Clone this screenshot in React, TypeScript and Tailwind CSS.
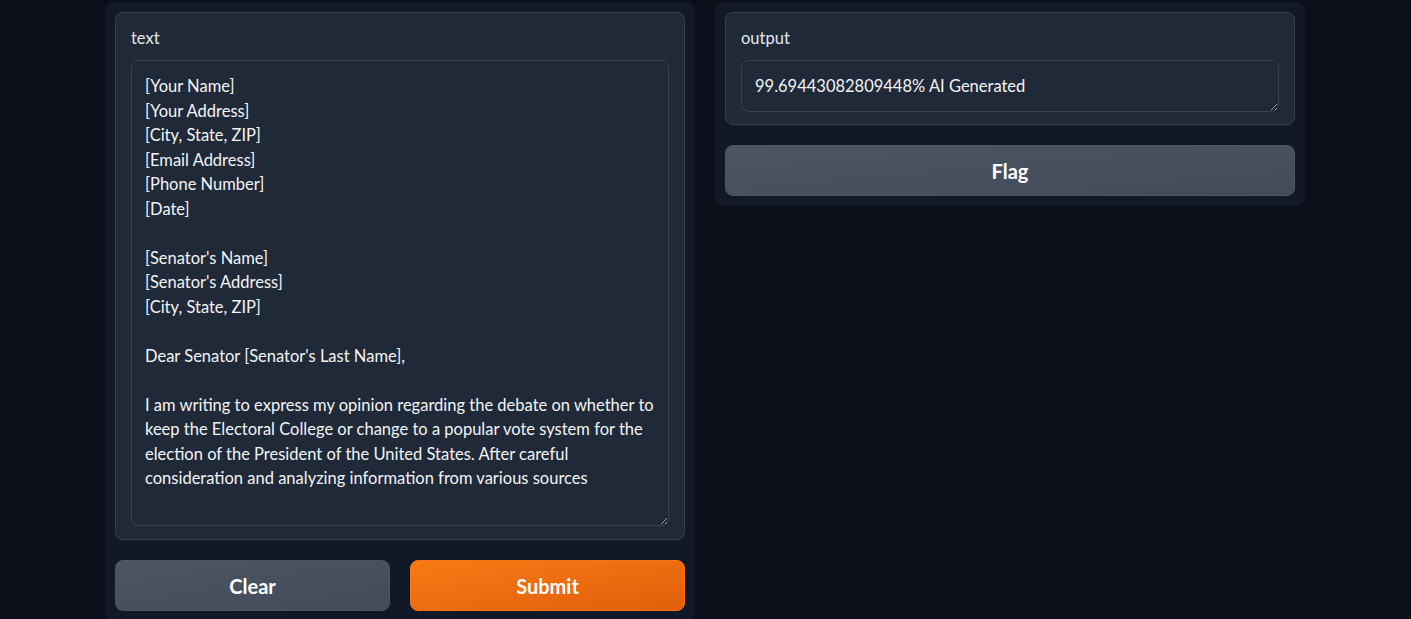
const letter = `[Your Name]
[Your Address]
[City, State, ZIP]
[Email Address]
[Phone Number]
[Date]

[Senator's Name]
[Senator's Address]
[City, State, ZIP]

Dear Senator [Senator's Last Name],

I am writing to express my opinion regarding the debate on whether to
keep the Electoral College or change to a popular vote system for the
election of the President of the United States. After careful
consideration and analyzing information from various sources`;

const fieldClass =
  "block w-full rounded-lg border border-[#374151] bg-[#1f2937] px-[13px] text-[16.5px] leading-[24.5px] text-[#f3f4f6] shadow-[inset_0_1px_2px_rgba(0,0,0,0.15)] outline-none [color-scheme:dark] whitespace-pre overflow-hidden";

const App = () => {
  return (
    <div
      className="min-h-screen bg-[#0b0f19]"
      style={{ fontFamily: "Lato, 'Open Sans', sans-serif" }}
    >
      <div className="mx-auto flex w-[1201px] items-start gap-5 pt-[2px]">
        {/* Input column */}
        <div className="flex w-[590px] flex-col gap-5 rounded-lg bg-[#111827] p-[10px]">
          <div className="rounded-lg border border-[#374151] bg-[#1f2937] px-[15px] pt-[15px] pb-[13px]">
            <div className="mb-[12px] text-[16.5px] leading-5 text-[#e5e7eb]">text</div>
            <textarea
              wrap="off"
              readOnly
              defaultValue={letter}
              className={`${fieldClass} h-[466px] resize-y pt-[13px]`}
            />
          </div>
          {/* Buttons */}
          <div className="flex gap-5">
            <button className="h-[51px] flex-1 rounded-lg border border-[#4b5563] bg-gradient-to-br from-[#4b5563] to-[#414b59] text-[20px] font-bold text-white">
              Clear
            </button>
            <button className="h-[51px] flex-1 rounded-lg border border-[#f97316] bg-gradient-to-br from-[#f77a15] to-[#e25e0b] text-[20px] font-bold text-white">
              Submit
            </button>
          </div>
        </div>

        {/* Output column */}
        <div className="flex w-[590px] flex-col gap-5 rounded-lg bg-[#111827] p-[10px]">
          <div className="rounded-lg border border-[#374151] bg-[#1f2937] px-[15px] pt-[15px] pb-[12px]">
            <div className="mb-[12px] text-[16.5px] leading-5 text-[#e5e7eb]">output</div>
            <textarea
              wrap="off"
              readOnly
              defaultValue="99.69443082809448% AI Generated"
              className={`${fieldClass} h-[52px] resize-y pt-[13px]`}
            />
          </div>
          <button className="h-[51px] w-full rounded-lg border border-[#4b5563] bg-gradient-to-br from-[#4b5563] to-[#414b59] text-[20px] font-bold text-white">
            Flag
          </button>
        </div>
      </div>
    </div>
  );
};

export default App;
